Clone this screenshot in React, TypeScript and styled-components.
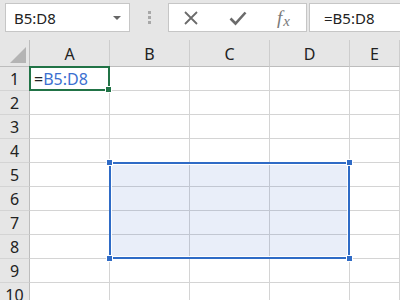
import React from 'react';
import styled, { createGlobalStyle } from 'styled-components';

const COLUMNS = ['A', 'B', 'C', 'D', 'E'];
const ROWS = [1, 2, 3, 4, 5, 6, 7, 8, 9, 10];
const ROW_HEIGHT = 24;
const COL_WIDTH = 80;
const HEAD_WIDTH = 30;

const GlobalStyle = createGlobalStyle`
  html, body {
    margin: 0;
    padding: 0;
    background: #ffffff;
    overflow: hidden;
  }
  body {
    font-family: 'Noto Sans', 'Open Sans', sans-serif;
  }
`;

export default function App() {
  return (
    <>
      <GlobalStyle />
      <Window>
        <FormulaBar>
          <NameBox>
            <span>B5:D8</span>
            <DropArrow />
          </NameBox>
          <Grip>
            <i />
            <i />
            <i />
          </Grip>
          <ActionBox>
            <ActionIcon>
              <svg width="16" height="16" viewBox="0 0 16 16">
                <path d="M2 2 L14 14 M14 2 L2 14" stroke="#6b6b6b" strokeWidth="1.8" fill="none" />
              </svg>
            </ActionIcon>
            <ActionIcon>
              <svg width="18" height="16" viewBox="0 0 18 16">
                <path d="M1.5 8.5 L6.5 13.5 L16.5 2.5" stroke="#6b6b6b" strokeWidth="2.6" fill="none" />
              </svg>
            </ActionIcon>
            <FxIcon>
              f<span>x</span>
            </FxIcon>
          </ActionBox>
          <FormulaInput>=B5:D8</FormulaInput>
        </FormulaBar>

        <Sheet>
          <Corner>
            <svg width="18" height="18" viewBox="0 0 18 18">
              <path d="M17 1 L17 17 L1 17 Z" fill="#b4b4b4" />
            </svg>
          </Corner>
          {COLUMNS.map((c) => (
            <ColHead key={c}>{c}</ColHead>
          ))}
          {ROWS.map((r) => (
            <React.Fragment key={r}>
              <RowHead>{r}</RowHead>
              {COLUMNS.map((c) => (
                <Cell key={c}>
                  {r === 1 && c === 'A' ? (
                    <>
                      <span>=</span>
                      <RefText>B5:D8</RefText>
                    </>
                  ) : null}
                </Cell>
              ))}
            </React.Fragment>
          ))}

          <ActiveCell>
            <FillHandle />
          </ActiveCell>

          <RangeBox>
            <Handle $x="left" $y="top" />
            <Handle $x="right" $y="top" />
            <Handle $x="left" $y="bottom" />
            <Handle $x="right" $y="bottom" />
          </RangeBox>
        </Sheet>
      </Window>
    </>
  );
}

const Window = styled.div`
  width: 400px;
  height: 300px;
  display: flex;
  flex-direction: column;
  background: #e6e6e6;
  overflow: hidden;
`;

const FormulaBar = styled.div`
  height: 40px;
  flex: none;
  display: flex;
  align-items: flex-start;
  padding-top: 3px;
  box-sizing: border-box;
  background: #e6e6e6;
`;

const Box = styled.div`
  height: 29px;
  box-sizing: border-box;
  background: #ffffff;
  border: 1px solid #c6c6c6;
  display: flex;
  align-items: center;
  font-size: 15px;
  color: #222222;
`;

const NameBox = styled(Box)`
  margin-left: 5px;
  width: 125px;
  padding: 0 0 0 8px;
  justify-content: space-between;
`;

const DropArrow = styled.i`
  width: 0;
  height: 0;
  margin-right: 8px;
  border-left: 4px solid transparent;
  border-right: 4px solid transparent;
  border-top: 4px solid #666666;
`;

const Grip = styled.div`
  width: 38px;
  height: 29px;
  display: flex;
  flex-direction: column;
  align-items: center;
  justify-content: center;
  gap: 2px;
  i {
    width: 3px;
    height: 3px;
    background: #a8a8a8;
  }
`;

const ActionBox = styled(Box)`
  width: 139px;
  padding-left: 14px;
`;

const ActionIcon = styled.div`
  width: 46px;
  display: flex;
  align-items: center;
  justify-content: flex-start;
`;

const FxIcon = styled.div`
  font-family: 'Liberation Serif', 'DejaVu Serif', serif;
  font-style: italic;
  font-size: 19px;
  color: #7a7a7a;
  margin-left: 2px;
  line-height: 1;
  span {
    font-size: 15px;
    position: relative;
    top: 2px;
    margin-left: 1px;
  }
`;

const FormulaInput = styled(Box)`
  margin-left: 2px;
  flex: 1;
  border-right: none;
  padding-left: 14px;
`;

const Sheet = styled.div`
  position: relative;
  flex: 1;
  display: grid;
  grid-template-columns: ${HEAD_WIDTH}px repeat(4, ${COL_WIDTH}px) 1fr;
  grid-template-rows: 27px repeat(${ROWS.length}, ${ROW_HEIGHT}px);
  background: #ffffff;
`;

const Corner = styled.div`
  background: #e6e6e6;
  border-right: 1px solid #bdbdbd;
  border-bottom: 1px solid #bdbdbd;
  display: flex;
  align-items: flex-end;
  justify-content: flex-end;
  padding: 0 2px 2px 0;
`;

const ColHead = styled.div`
  background: #e6e6e6;
  border-right: 1px solid #cdcdcd;
  border-bottom: 1px solid #bdbdbd;
  display: flex;
  align-items: center;
  justify-content: center;
  font-size: 16px;
  color: #222222;
  padding-top: 1px;
`;

const RowHead = styled.div`
  background: #e6e6e6;
  border-right: 1px solid #bdbdbd;
  border-bottom: 1px solid #d4d4d4;
  display: flex;
  align-items: center;
  justify-content: center;
  font-size: 16px;
  color: #222222;
`;

const Cell = styled.div`
  border-right: 1px solid #d4d4d4;
  border-bottom: 1px solid #d4d4d4;
  display: flex;
  align-items: center;
  padding-left: 4px;
  font-size: 16px;
  color: #222222;
  white-space: nowrap;
`;

const RefText = styled.span`
  color: #3b6fd0;
`;

const ActiveCell = styled.div`
  position: absolute;
  left: ${HEAD_WIDTH - 1}px;
  top: 26px;
  width: ${COL_WIDTH + 1}px;
  height: ${ROW_HEIGHT + 1}px;
  box-sizing: border-box;
  border: 2px solid #217346;
  pointer-events: none;
`;

const FillHandle = styled.i`
  position: absolute;
  right: -4px;
  bottom: -4px;
  width: 5px;
  height: 5px;
  background: #217346;
  border: 1px solid #ffffff;
`;

const RangeBox = styled.div`
  position: absolute;
  left: ${HEAD_WIDTH + COL_WIDTH - 1}px;
  top: ${27 + ROW_HEIGHT * 4 - 1}px;
  width: ${COL_WIDTH * 3 + 1}px;
  height: ${ROW_HEIGHT * 4 + 1}px;
  box-sizing: border-box;
  border: 2px solid #2f6bc6;
  background: rgba(44, 88, 196, 0.1);
  box-shadow: inset 0 0 0 1px #ffffff;
  pointer-events: none;
`;

const Handle = styled.i<{ $x: 'left' | 'right'; $y: 'top' | 'bottom' }>`
  position: absolute;
  ${({ $x }) => $x}: -5px;
  ${({ $y }) => $y}: -5px;
  width: 5px;
  height: 5px;
  background: #2f6bc6;
  border: 1px solid #ffffff;
`;
